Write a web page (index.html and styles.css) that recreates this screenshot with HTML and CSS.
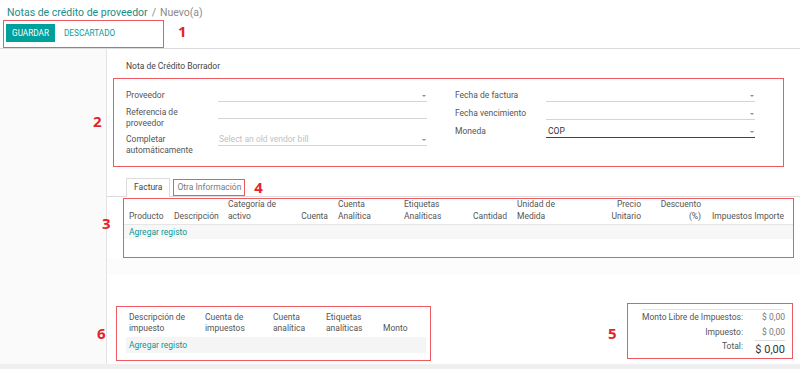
FILE: index.html
```html
<!DOCTYPE html>
<html lang="es">
<head>
<meta charset="utf-8">
<title>Notas de crédito de proveedor</title>
<link rel="stylesheet" href="styles.css">
</head>
<body>
<header class="cpanel">
  <div class="crumbs"><span class="link">Notas de crédito de proveedor</span><span class="sep">/</span><span class="cur">Nuevo(a)</span></div>
  <div class="cp-row">
    <div class="btnbox anno">
      <span class="btn btn-primary">Guardar</span>
      <span class="btn">Descartado</span>
    </div>
    <span class="num num-1">1</span>
  </div>
</header>
<div class="main">
  <aside class="side"></aside>
  <section class="sheet">
    <div class="title">Nota de Crédito Borrador</div>
    <div class="group-box anno">
      <span class="num num-2">2</span>
      <div class="fgroup">
        <div class="lbl">Proveedor</div>
        <div class="fld"><div class="inp sel"></div></div>
        <div class="lbl">Referencia de<br>proveedor</div>
        <div class="fld"><div class="inp"></div></div>
        <div class="lbl">Completar<br>automáticamente</div>
        <div class="fld"><div class="inp sel"><span class="ph">Select an old vendor bill</span></div></div>
      </div>
      <div class="fgroup right">
        <div class="lbl">Fecha de factura</div>
        <div class="fld"><div class="inp sel"></div></div>
        <div class="lbl">Fecha vencimiento</div>
        <div class="fld"><div class="inp sel"></div></div>
        <div class="lbl">Moneda</div>
        <div class="fld"><div class="inp sel dark"><span class="val">COP</span></div></div>
      </div>
    </div>

    <div class="tabs">
      <span class="tab active">Factura</span>
      <span class="tab tab2 anno">Otra Información</span>
      <span class="num num-4">4</span>
    </div>

    <div class="lines anno">
      <span class="num num-3">3</span>
      <div class="lhead">
        <div class="c">Producto</div>
        <div class="c">Descripción</div>
        <div class="c">Categoría de<br>activo</div>
        <div class="c r">Cuenta</div>
        <div class="c">Cuenta<br>Analítica</div>
        <div class="c">Etiquetas<br>Analíticas</div>
        <div class="c r">Cantidad</div>
        <div class="c">Unidad de<br>Medida</div>
        <div class="c r">Precio<br>Unitario</div>
        <div class="c r">Descuento<br>(%)</div>
        <div class="c c-imp">Impuestos</div>
        <div class="c r c-last">Importe</div>
      </div>
      <div class="addrow">Agregar registo</div>
    </div>
    <div class="strip"></div>

    <div class="bottom">
      <div class="taxbox anno">
        <span class="num num-6">6</span>
        <div class="thead">
          <div class="tc">Descripción de<br>impuesto</div>
          <div class="tc">Cuenta de<br>impuestos</div>
          <div class="tc">Cuenta<br>analítica</div>
          <div class="tc">Etiquetas<br>analíticas</div>
          <div class="tc">Monto</div>
        </div>
        <div class="taddrow">Agregar registo</div>
      </div>
      <div class="totals anno">
        <span class="num num-5">5</span>
        <div class="tgrid">
          <div class="tl">Monto Libre de Impuestos:</div>
          <div class="tv">$ 0,00</div>
          <div class="tl">Impuesto:</div>
          <div class="tv">$ 0,00</div>
          <div class="tl tl-total">Total:</div>
          <div class="tv tv-total">$ 0,00</div>
        </div>
      </div>
    </div>
  </section>
</div>
</body>
</html>
```

FILE: styles.css
```css
* { box-sizing: border-box; }
html, body { margin: 0; padding: 0; }
body {
  width: 800px;
  height: 369px;
  overflow: hidden;
  font-family: Roboto, "Liberation Sans", sans-serif;
  font-size: 8.5px;
  color: #555;
  background: #fff;
}

/* annotation frames and numbers */
.anno { border: 1px solid #ee5a62; }
.num {
  font-family: "Open Sans", "Liberation Sans", sans-serif;
  font-weight: 700;
  font-size: 15px;
  line-height: 15px;
  color: #e3232b;
}
.num-2, .num-3, .num-5, .num-6 { position: absolute; }
.num-2 { left: -21px; top: 35px; }
.num-3 { left: -22px; top: 17px; }
.num-6 { left: -20px; top: 19px; }
.num-5 { left: -20px; top: 22px; }

/* control panel */
.cpanel {
  height: 49px;
  border-bottom: 1px solid #dcdcdc;
  padding-left: 3px;
}
.crumbs {
  height: 20px;
  padding: 5px 0 0 4px;
  font-size: 10.5px;
  line-height: 15px;
  white-space: nowrap;
}
.crumbs .link { color: #1a8c88; }
.crumbs .sep { color: #8a8a8a; margin: 0 4px; }
.crumbs .cur { color: #8a8a8a; }
.cp-row { display: flex; align-items: flex-start; }
.btnbox {
  width: 161px;
  height: 28px;
  padding: 3px 2px;
  display: flex;
  gap: 2px;
}
.btn {
  height: 18px;
  line-height: 18px;
  padding: 0 7px;
  font-size: 8.2px;
  font-weight: 400;
  text-transform: uppercase;
  color: #00a09d;
  white-space: nowrap;
}
.btn-primary { background: #00a09d; color: #fff; width: 49px; text-align: center; padding: 0; }
.num-1 { margin-left: 14px; margin-top: 4px; }

/* main layout */
.main {
  display: flex;
  height: 320px;
  background: #efefef;
}
.side {
  width: 107px;
  height: 315px;
  background: #fafafa;
  border-right: 1px solid #e3e3e3;
}
.sheet {
  flex: 1;
  height: 315px;
  background: #fff;
}
.title {
  margin: 12px 0 0 19px;
  line-height: 11px;
  color: #444;
}

/* field groups */
.group-box {
  position: relative;
  margin: 6px 0 0 6px;
  width: 671px;
  padding: 8px 0 8px 12px;
  display: flex;
  align-items: flex-start;
}
.fgroup {
  display: grid;
  grid-template-columns: 92px 209px;
}
.fgroup.right {
  margin-left: 28px;
  grid-template-columns: 91px 209px;
}
.lbl, .fld { padding: 2.5px 0; line-height: 11px; }
.right .lbl, .right .fld { padding: 3px 0; }
.inp {
  height: 12px;
  line-height: 11px;
  border-bottom: 1px solid #d4d4d4;
  position: relative;
}
.inp.dark { border-bottom-color: #444; }
.inp.sel::after {
  content: "";
  position: absolute;
  right: 1px;
  top: 5px;
  border-top: 2.5px solid #8c8c8c;
  border-left: 2.5px solid transparent;
  border-right: 2.5px solid transparent;
}
.ph { color: #c2c2c2; padding-left: 1px; }
.val { color: #333; padding-left: 2px; }

/* tabs */
.tabs {
  margin-top: 11px;
  height: 19px;
  border-bottom: 1px solid #dcdcdc;
  padding-left: 19px;
  display: flex;
  align-items: flex-end;
}
.tab {
  line-height: 17px;
  padding: 0 7px;
  white-space: nowrap;
}
.tab.active {
  height: 19px;
  margin-bottom: -1px;
  border: 1px solid #dcdcdc;
  border-bottom: none;
  background: #fff;
  color: #444;
}
.tab2 {
  height: 17px;
  line-height: 15px;
  margin-left: 3px;
  padding: 0 3px;
  color: #7a7a7a;
}
.num-4 { margin-left: 9px; align-self: center; }

/* invoice lines */
.lines {
  position: relative;
  margin: 1px 0 0 16px;
  width: 671px;
  height: 60px;
}
.lhead {
  display: grid;
  grid-template-columns: 45px 54px 73px 37px 66px 66px 47px 78px 56px 60px 44px 1fr;
  align-items: end;
  height: 26px;
  padding-bottom: 2px;
  border-bottom: 1px solid #e6e6e6;
  box-shadow: 0 1px 2px rgba(0, 0, 0, 0.04);
}
.c {
  padding: 0 5px;
  line-height: 11.5px;
  white-space: nowrap;
  color: #555;
}
.c.r { text-align: right; }
.c-imp { padding: 0 0 0 6px; }
.c-last { padding: 0 9px 0 0; }
.addrow {
  height: 14px;
  line-height: 14px;
  padding-left: 5px;
  background: #f7f7f7;
  color: #10958f;
}
.strip {
  height: 16px;
  background: #fcfcfc;
}

/* bottom */
.bottom {
  display: flex;
  align-items: flex-start;
  padding-top: 29px;
}
.taxbox {
  position: relative;
  margin: 3px 0 0 9px;
  width: 315px;
  padding: 4.5px 4px 7px 9px;
}
.thead {
  display: grid;
  grid-template-columns: 76px 68px 53px 57px 46px;
  align-items: end;
  padding-bottom: 3.5px;
}
.tc {
  padding-left: 3px;
  line-height: 11px;
  white-space: nowrap;
  color: #555;
}
.taddrow {
  height: 16px;
  line-height: 16px;
  padding-left: 3px;
  background: #f5f5f5;
  color: #10958f;
}
.totals {
  position: relative;
  margin-left: auto;
  margin-right: 7px;
  width: 166px;
  padding: 5px 9px 1px 14px;
}
.tgrid {
  display: grid;
  grid-template-columns: 1fr 42px;
  align-items: start;
  border-top: 1px solid #e2e2e2;
}
.tl {
  text-align: right;
  line-height: 11px;
  padding: 2px 0;
  color: #555;
  white-space: nowrap;
}
.tv {
  text-align: right;
  line-height: 11px;
  padding: 2px 0;
  color: #777;
  white-space: nowrap;
}
.tl-total { padding: 1px 0 0; }
.tv-total {
  margin-left: 12px;
  border-top: 1px solid #dcdcdc;
  padding: 1px 0 0;
  line-height: 15px;
  font-size: 11px;
  color: #333;
}
```
